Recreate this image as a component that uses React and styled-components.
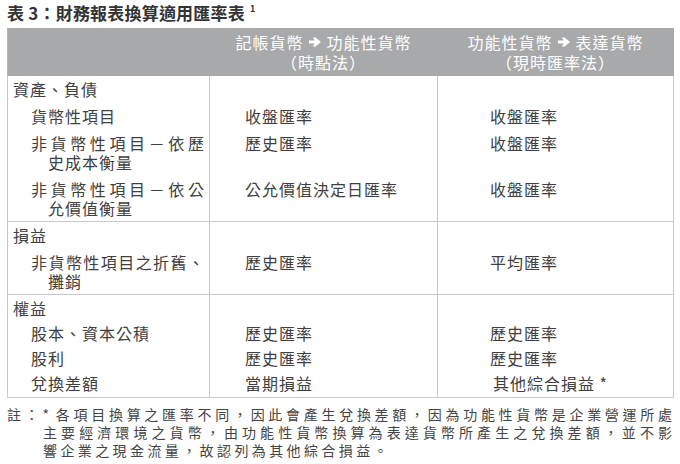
import React from "react";
import styled, { createGlobalStyle } from "styled-components";

const GlobalStyle = createGlobalStyle`
	body {
		margin: 0;
		background: #fff;
	}
`;

const sections = [
	{
		heading: "資產、負債",
		gap: 8,
		items: [
			{ label: ["貨幣性項目"], a: "收盤匯率", b: "收盤匯率" },
			{ label: ["非貨幣性項目－依歷", "史成本衡量"], a: "歷史匯率", b: "收盤匯率" },
			{ label: ["非貨幣性項目－依公", "允價值衡量"], a: "公允價值決定日匯率", b: "收盤匯率" },
		],
	},
	{
		heading: "損益",
		gap: 8,
		items: [{ label: ["非貨幣性項目之折舊、", "攤銷"], a: "歷史匯率", b: "平均匯率" }],
	},
	{
		heading: "權益",
		gap: 6,
		items: [
			{ label: ["股本、資本公積"], a: "歷史匯率", b: "歷史匯率" },
			{ label: ["股利"], a: "歷史匯率", b: "歷史匯率" },
			{ label: ["兌換差額"], a: "當期損益", b: "其他綜合損益 *", shift: 3 },
		],
	},
];

function Arrow() {
	return (
		<ArrowIcon viewBox="0 0 12 10" width="12" height="10">
			<path d="M0 3.6H5.6L3.9 0.4H6.6L12 5L6.6 9.6H3.9L5.6 6.4H0Z" fill="#fff" />
		</ArrowIcon>
	);
}

function App() {
	return (
		<Page lang="zh-Hant">
			<GlobalStyle />
			<Title>
				表 3：財務報表換算適用匯率表<sup>1</sup>
			</Title>
			<Table>
				<thead>
					<tr>
						<HeadCell $w={201} />
						<HeadCell $w={227}>
							<HeadLine>
								記帳貨幣
								<Arrow />
								功能性貨幣
							</HeadLine>
							<HeadLine>（時點法）</HeadLine>
						</HeadCell>
						<HeadCell $w={235}>
							<HeadLine>
								功能性貨幣
								<Arrow />
								表達貨幣
							</HeadLine>
							<HeadLine>（現時匯率法）</HeadLine>
						</HeadCell>
					</tr>
				</thead>
				<tbody>
					{sections.map((section, si) => (
						<React.Fragment key={section.heading}>
							<Row $start $top={4} $bottom={0}>
								<LabelCell>{section.heading}</LabelCell>
								<ValueCell $pl={35} />
								<ValueCell $pl={52} />
							</Row>
							{section.items.map((item, i) => {
								const last = i === section.items.length - 1;
								return (
									<Row
										key={item.label[0]}
										$top={section.gap}
										$bottom={last ? (si === 2 ? 4 : 3) : 0}
									>
										<LabelCell $indent>
											{item.label.length > 1 ? (
												<>
													<Justified>{item.label[0]}</Justified>
													<Continued>{item.label[1]}</Continued>
												</>
											) : (
												item.label[0]
											)}
										</LabelCell>
										<ValueCell $pl={35}>{item.a}</ValueCell>
										<ValueCell $pl={52 + (item.shift || 0)}>{item.b}</ValueCell>
									</Row>
								);
							})}
						</React.Fragment>
					))}
				</tbody>
			</Table>
			<Note>
				<NoteLine $hang $justify>
					註：* 各項目換算之匯率不同，因此會產生兌換差額，因為功能性貨幣是企業營運所處
				</NoteLine>
				<NoteLine $justify>
					主要經濟環境之貨幣，由功能性貨幣換算為表達貨幣所產生之兌換差額，並不影
				</NoteLine>
				<NoteLine>響企業之現金流量，故認列為其他綜合損益。</NoteLine>
			</Note>
		</Page>
	);
}

const Page = styled.div`
	width: 680px;
	height: 464px;
	box-sizing: border-box;
	padding: 3px 0 0 7px;
	font-family: "Noto Sans CJK TC", "Noto Sans", sans-serif;
	color: #404040;
	background: #fff;
	overflow: hidden;
`;

const Title = styled.h1`
	margin: 0 0 5px;
	font-size: 17px;
	line-height: 20px;
	font-weight: 700;
	color: #333;
	letter-spacing: 0.2px;

	sup {
		font-size: 9px;
		line-height: 0;
		vertical-align: 8px;
		margin-left: 5px;
	}
`;

const Table = styled.table`
	width: 663px;
	border-collapse: collapse;
	table-layout: fixed;
	font-size: 16px;
	line-height: 19px;
	letter-spacing: 1px;
`;

const HeadCell = styled.th`
	width: ${(p) => p.$w}px;
	background: #a8a9ab;
	color: #fff;
	font-weight: 400;
	padding: 3px 0;
	line-height: 20px;
	text-align: center;
	border: 1px solid #a8a9ab;
	border-left-color: #dadada;

	&:first-child {
		border-left-color: #b4b4b4;
	}
`;

const HeadLine = styled.div`
	display: flex;
	justify-content: center;
	align-items: center;
	white-space: nowrap;
`;

const ArrowIcon = styled.svg`
	margin: 0 6px 0 5px;
	flex: none;
`;

const Row = styled.tr`
	${(p) => (p.$start ? "border-top: 1px solid #c8c8c8;" : "")}

	& > td {
		padding-top: ${(p) => p.$top}px;
		padding-bottom: ${(p) => p.$bottom}px;
	}
`;

const LabelCell = styled.td`
	vertical-align: top;
	padding-left: ${(p) => (p.$indent ? 23 : 5)}px;
	padding-right: 5px;
	border-left: 1px solid #c8c8c8;
	border-right: 1px solid #c8c8c8;
	white-space: nowrap;

	tr:last-child > & {
		border-bottom: 1px solid #c8c8c8;
	}
`;

const ValueCell = styled.td`
	vertical-align: top;
	padding-left: ${(p) => p.$pl}px;
	padding-right: 4px;
	border-left: 1px solid #c8c8c8;
	border-right: 1px solid #c8c8c8;
	white-space: nowrap;

	tr:last-child > & {
		border-bottom: 1px solid #c8c8c8;
	}
`;

const Justified = styled.span`
	display: block;
	text-align: justify;
	text-align-last: justify;
	letter-spacing: 0;
`;

const Continued = styled.span`
	display: block;
	padding-left: 17px;
`;

const Note = styled.div`
	width: 665px;
	box-sizing: border-box;
	margin-top: 7px;
	padding-left: 36px;
	font-size: 14px;
	line-height: 18px;
	letter-spacing: 3.4px;
	color: #444;
`;

const NoteLine = styled.div`
	white-space: nowrap;
	text-align: justify;
	text-align-last: ${(p) => (p.$justify ? "justify" : "left")};
	margin-left: ${(p) => (p.$hang ? -36 : 0)}px;
	${(p) => (p.$justify ? "white-space: normal; letter-spacing: 0;" : "")}
`;

export default App;
